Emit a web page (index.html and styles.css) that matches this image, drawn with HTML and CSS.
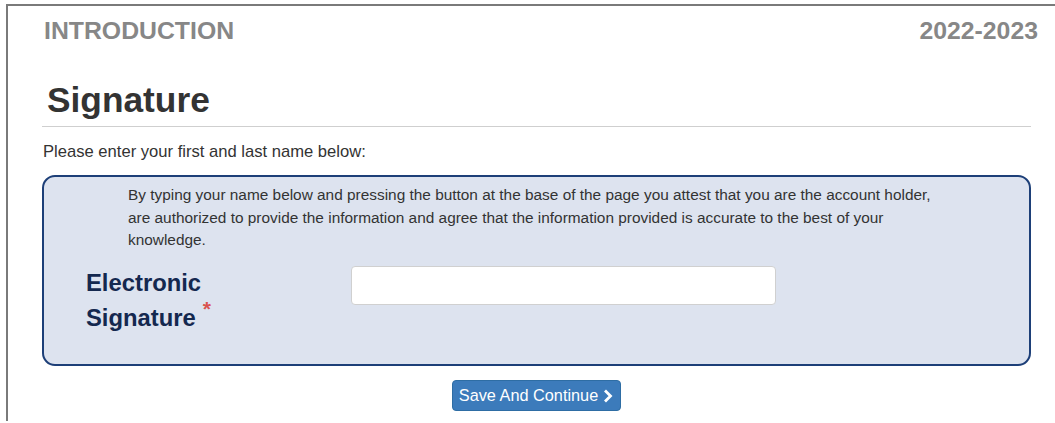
FILE: index.html
```html
<!DOCTYPE html>
<html lang="en">
<head>
<meta charset="utf-8">
<title>Signature</title>
<link rel="stylesheet" href="styles.css">
</head>
<body>
<div class="frame">
  <header class="page-head">
    <span class="section-name">INTRODUCTION</span>
    <span class="year">2022-2023</span>
  </header>
  <main class="content">
    <h1 class="title">Signature</h1>
    <p class="hint">Please enter your first and last name below:</p>
    <section class="sign-box">
      <p class="attest">By typing your name below and pressing the button at the base of the page you attest that you are the account holder, are authorized to provide the information and agree that the information provided is accurate to the best of your knowledge.</p>
      <div class="field">
        <div class="label-col">
          <label class="field-label" for="esig">Electronic Signature<span class="req">*</span></label>
        </div>
        <input class="field-input" id="esig" type="text">
      </div>
    </section>
    <div class="actions">
      <button class="btn-primary" type="button">Save And Continue <svg class="chev" viewBox="0 0 10 14" width="10" height="14"><path d="M2 1.5 L7.5 7 L2 12.5" fill="none" stroke="#fff" stroke-width="2.8" stroke-linejoin="miter"/></svg></button>
    </div>
  </main>
</div>
</body>
</html>
```

FILE: styles.css
```css
html, body {
  margin: 0;
  padding: 0;
  background: #fff;
  font-family: "Liberation Sans", Arial, sans-serif;
  color: #333;
}

.frame {
  margin: 4px 0 0 6px;
  border-top: 2px solid #7a7a7a;
  border-left: 2px solid #7a7a7a;
  height: 417px;
  box-sizing: border-box;
  overflow: hidden;
}

.page-head {
  display: flex;
  justify-content: space-between;
  align-items: center;
  padding: 10px 17px 0 36px;
  height: 30px;
}

.section-name,
.year {
  font-size: 24.8px;
  font-weight: bold;
  color: #878787;
  line-height: 30px;
}

.content {
  margin: 0 24px 0 34px;
  padding-top: 33px;
}

.title {
  margin: 0;
  padding: 0 0 6px 5px;
  font-size: 35.3px;
  font-weight: bold;
  line-height: 41px;
  color: #333;
  border-bottom: 1px solid #cfcfcf;
}

.hint {
  margin: 15px 0 0 1px;
  font-size: 16.6px;
  line-height: 20px;
}

.sign-box {
  margin-top: 13px;
  border: 2px solid #1d3f78;
  border-radius: 13px;
  background: #dde3ef;
  padding: 7px 82px 20px 42px;
  height: 191px;
  box-sizing: border-box;
}

.attest {
  margin: 0 0 0 42px;
  font-size: 15.4px;
  line-height: 22.5px;
  color: #333;
}

.field {
  display: flex;
  align-items: flex-start;
  margin-top: 14px;
}

.label-col {
  width: 265px;
  flex: none;
}

.field-label {
  display: block;
  max-width: 140px;
  font-size: 23.8px;
  font-weight: bold;
  line-height: 35px;
  color: #14284f;
  margin-top: -1px;
}

.req {
  position: relative;
  top: -10px;
  color: #d9534f;
  font-size: 21px;
  font-weight: bold;
  line-height: 0;
  margin-left: 7px;
}

.field-input {
  width: 425px;
  height: 39px;
  flex: none;
  box-sizing: border-box;
  border: 1px solid #d0d0d0;
  border-radius: 4px;
  background: #fff;
  font: 16px "Liberation Sans", Arial, sans-serif;
  padding: 6px 12px;
}

.actions {
  display: flex;
  justify-content: center;
  padding-top: 14px;
}

.btn-primary {
  display: inline-flex;
  align-items: center;
  gap: 5px;
  height: 31px;
  padding: 0 7px 0 6px;
  border: 1px solid #2e6da4;
  border-radius: 4px;
  background: #3c7bbb;
  color: #fff;
  font: 16.3px "Liberation Sans", Arial, sans-serif;
  cursor: pointer;
}

.chev {
  display: block;
}
```
